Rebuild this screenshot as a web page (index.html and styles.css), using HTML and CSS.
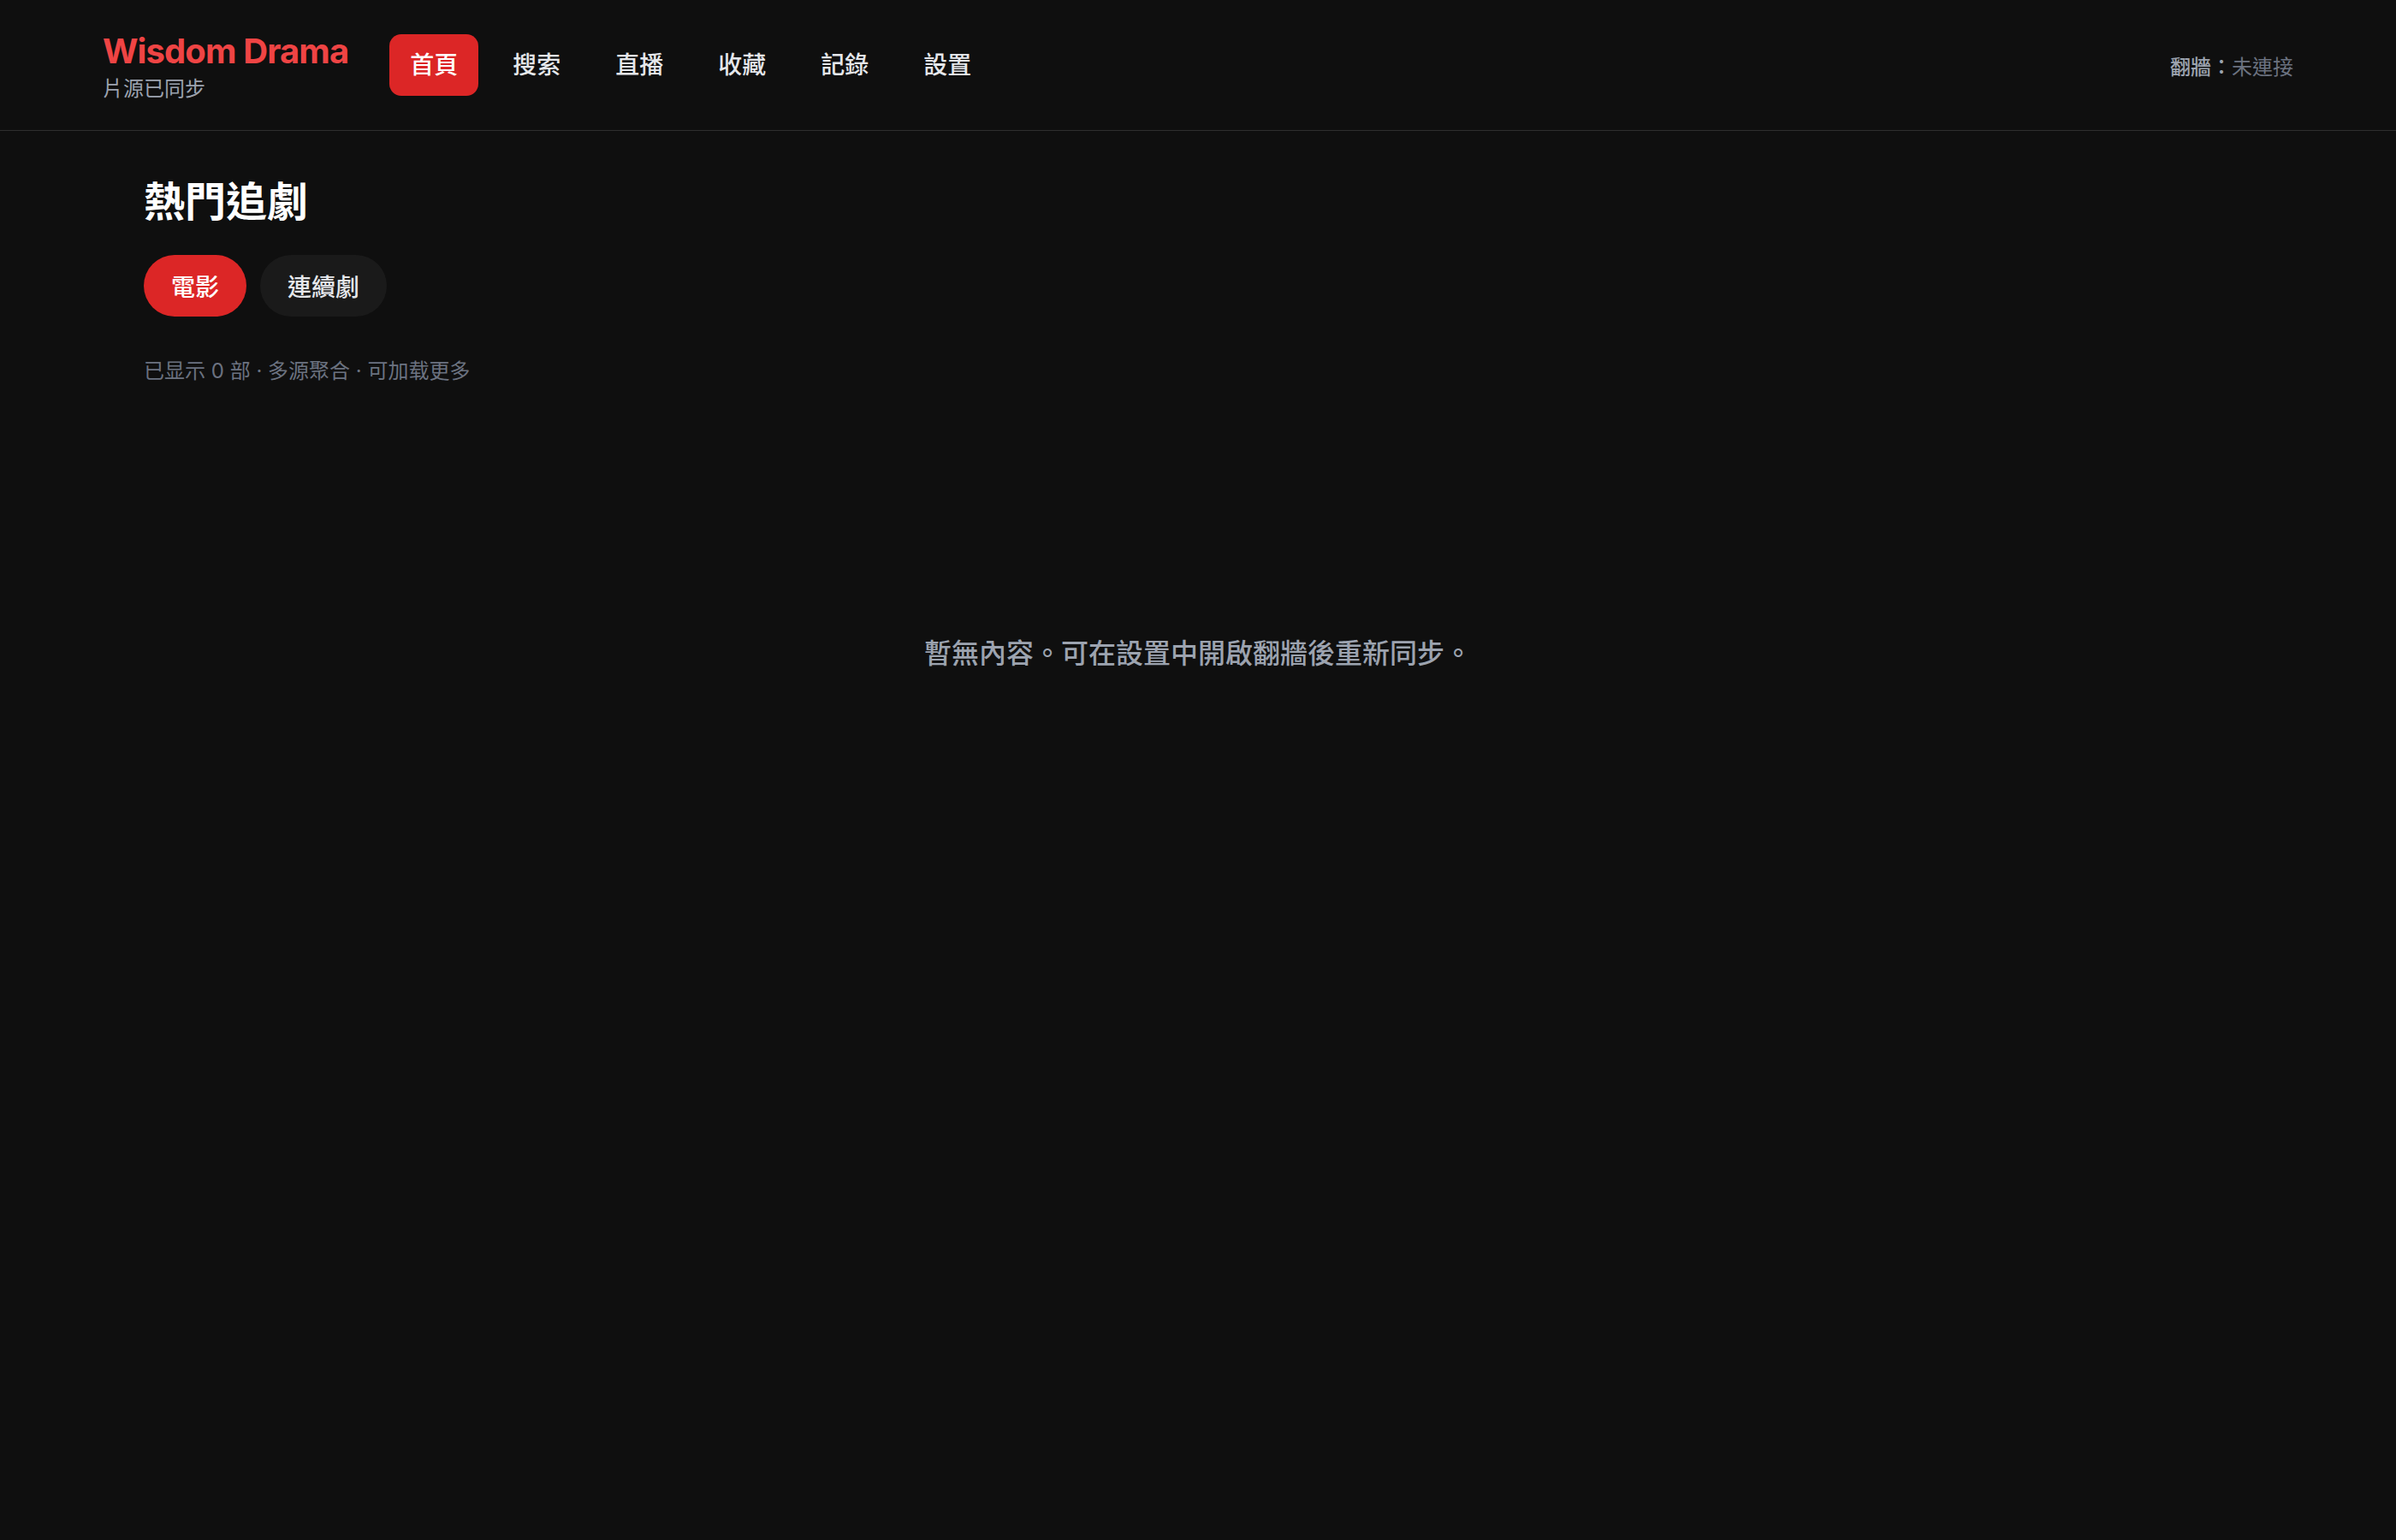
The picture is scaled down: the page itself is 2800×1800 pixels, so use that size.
FILE: index.html
```html
<!DOCTYPE html>
<html lang="zh-Hant">
<head>
    <meta charset="UTF-8">
    <meta name="viewport" content="width=device-width, initial-scale=1.0">
    <title>Wisdom Drama</title>
    <link rel="stylesheet" href="styles.css">
</head>
<body>
    <header class="topbar">
        <div class="brand">
            <div class="brand-name">Wisdom Drama</div>
            <div class="brand-status">片源已同步</div>
        </div>
        <nav class="nav">
            <a class="nav-item active" href="#">首頁</a>
            <a class="nav-item" href="#">搜索</a>
            <a class="nav-item" href="#">直播</a>
            <a class="nav-item" href="#">收藏</a>
            <a class="nav-item" href="#">記錄</a>
            <a class="nav-item" href="#">設置</a>
        </nav>
        <div class="proxy">
            <span class="proxy-label">翻牆：</span><span class="proxy-value">未連接</span>
        </div>
    </header>

    <main class="page">
        <h1 class="page-title">熱門追劇</h1>
        <div class="tabs">
            <button class="tab active">電影</button>
            <button class="tab">連續劇</button>
        </div>
        <p class="meta">已显示 0 部 · 多源聚合 · 可加载更多</p>
        <div class="empty">暫無內容。可在設置中開啟翻牆後重新同步。</div>
    </main>
</body>
</html>
```

FILE: styles.css
```css
body {
    font-family: Inter, "Noto Sans CJK TC", sans-serif;
    background-color: #0f0f0f;
    color: #e5e7eb;
    margin: 0;
    padding: 0;
}

.topbar {
    display: flex;
    align-items: center;
    height: 152px;
    padding: 0 120px;
    border-bottom: 1px solid #2e2e2e;
}

.brand {
    display: flex;
    flex-direction: column;
    gap: 4px;
    margin: 4px 48px 0 0;
}

.brand-name {
    color: #ef4444;
    font-size: 40px;
    font-weight: 700;
    letter-spacing: -0.9px;
    line-height: 48px;
}

.brand-status {
    color: #9ca3af;
    font-size: 24px;
    line-height: 32px;
}

.nav {
    display: flex;
    gap: 16px;
    flex: 1;
}

.nav-item {
    display: block;
    padding: 0 24px;
    height: 72px;
    line-height: 72px;
    border-radius: 14px;
    color: #e5e7eb;
    font-size: 28px;
    font-weight: 500;
    text-decoration: none;
}

.nav-item.active {
    background-color: #dc2626;
    color: #ffffff;
}

.proxy {
    font-size: 24px;
}

.proxy-label {
    color: #9ca3af;
    font-weight: 500;
}

.proxy-value {
    color: #6b7280;
}

.page {
    padding: 51px 168px;
}

.page-title {
    margin: 0 0 30px;
    color: #ffffff;
    font-size: 48px;
    font-weight: 700;
    line-height: 64px;
}

.tabs {
    display: flex;
    gap: 16px;
}

.tab {
    height: 72px;
    padding: 0 32px;
    border: none;
    border-radius: 36px;
    background-color: #1a1a1a;
    color: #e5e7eb;
    font-family: inherit;
    font-size: 28px;
    font-weight: 500;
    cursor: pointer;
}

.tab.active {
    background-color: #dc2626;
    color: #ffffff;
}

.meta {
    margin: 48px 0 0;
    color: #6b7280;
    font-size: 24px;
    line-height: 32px;
}

.empty {
    padding: 288px 0;
    text-align: center;
    color: #9ca3af;
    font-size: 32px;
    font-weight: 500;
}
```
